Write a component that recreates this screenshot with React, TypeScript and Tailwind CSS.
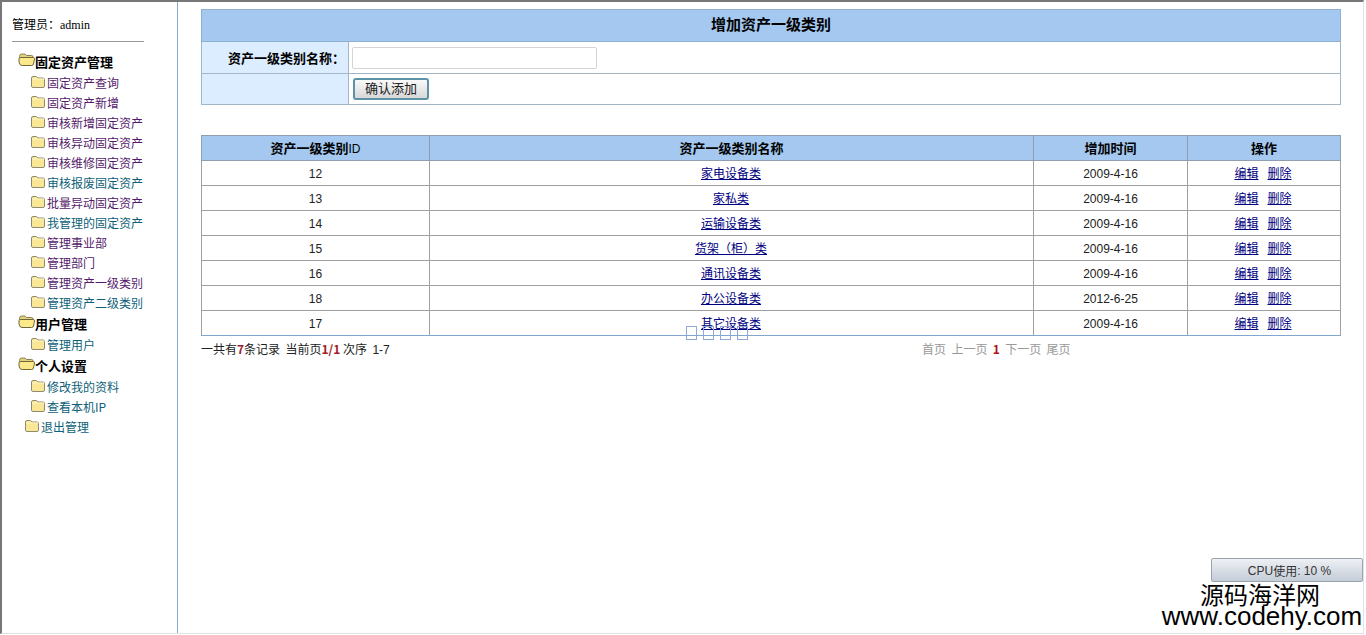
const cjk = "font-['SimSun','Noto_Sans_CJK_SC',sans-serif]";

function Folder({ open = false }: { open?: boolean }) {
  if (open) {
    return (
      <svg width="17" height="14" viewBox="0 0 17 14" className="shrink-0 -mt-[5px]">
        <path d="M1.5 3.5 Q1.5 1 3.5 1 H7 L8.5 2.5 H13.5 Q15 2.5 15 4 V5 H1.5 Z" fill="#e3d27c" stroke="#8a8050" />
        <path d="M1 5.5 Q1 4.5 3 4.5 H15.5 Q16.5 4.5 16.5 6 L15.5 11 Q15.2 12.5 13.5 12.5 H4 Q1.5 12.5 1 9 Z" fill="#fbe98a" stroke="#6f683e" />
      </svg>
    );
  }
  return (
    <svg width="14" height="12" viewBox="0 0 14 12" className="shrink-0 -mt-[3px]">
      <path d="M0.5 2 Q0.5 0.5 2 0.5 H5.5 L7 2 H12 Q13.5 2 13.5 3.5 V10 Q13.5 11.5 12 11.5 H2 Q0.5 11.5 0.5 10 Z" fill="#fae796" stroke="#8f8a72" />
      <path d="M1 3 H13" stroke="#fff4c0" />
    </svg>
  );
}

function Item({ label, color, pl = "pl-[29px]" }: { label: string; color: string; pl?: string }) {
  return (
    <div className={`flex h-5 items-center gap-[2px] ${pl}`}>
      <Folder />
      <span className={`text-xs leading-5 whitespace-nowrap ${color}`}>{label}</span>
    </div>
  );
}

function Group({ label }: { label: string }) {
  return (
    <div className="flex h-[22px] items-center pl-4">
      <Folder open />
      <span className="text-[13px] leading-[22px] font-bold text-black whitespace-nowrap">{label}</span>
    </div>
  );
}

const purple = "text-[#551a6b]";
const teal = "text-[#0e5f78]";

const rows = [
  ["12", "家电设备类", "2009-4-16"],
  ["13", "家私类", "2009-4-16"],
  ["14", "运输设备类", "2009-4-16"],
  ["15", "货架（柜）类", "2009-4-16"],
  ["16", "通讯设备类", "2009-4-16"],
  ["18", "办公设备类", "2012-6-25"],
  ["17", "其它设备类", "2009-4-16"],
];

export default function App() {
  return (
    <div className={`relative flex h-[634px] w-[1364px] overflow-hidden border-t-2 border-r border-b border-l-2 border-t-[#777777] border-r-[#e2e2e2] border-b-[#e2e2e2] border-l-[#777777] bg-white ${cjk}`}>
      <aside className="h-full w-[176px] shrink-0 border-r border-[#86acd0] pt-[13px]">
        <div className="ml-[10px] w-[132px] border-b border-[#999999] pb-[7px] text-xs leading-[18px] text-black">
          管理员：<span className="font-['Liberation_Serif',serif]">admin</span>
        </div>
        <div className="mt-[9px]">
          <Group label="固定资产管理" />
          <Item label="固定资产查询" color={purple} />
          <Item label="固定资产新增" color={purple} />
          <Item label="审核新增固定资产" color={purple} />
          <Item label="审核异动固定资产" color={purple} />
          <Item label="审核维修固定资产" color={purple} />
          <Item label="审核报废固定资产" color={teal} />
          <Item label="批量异动固定资产" color={purple} />
          <Item label="我管理的固定资产" color={teal} />
          <Item label="管理事业部" color={purple} />
          <Item label="管理部门" color={purple} />
          <Item label="管理资产一级类别" color={purple} />
          <Item label="管理资产二级类别" color={teal} />
          <Group label="用户管理" />
          <Item label="管理用户" color={teal} />
          <Group label="个人设置" />
          <Item label="修改我的资料" color={teal} />
          <Item label="查看本机IP" color={teal} />
          <Item label="退出管理" color={teal} pl="pl-[23px]" />
        </div>
      </aside>

      <main className="ml-[23px] w-[1140px] shrink-0 pt-[7px]">
        <table className="w-[1140px] table-fixed border-collapse border border-[#8fb0cf] text-black">
          <colgroup>
            <col className="w-[147px]" />
            <col />
          </colgroup>
          <tbody>
            <tr className="h-8">
              <td colSpan={2} className="border border-[#8fb0cf] bg-[#a4c8f0] pb-[2px] text-center text-[15px] font-bold">
                增加资产一级类别
              </td>
            </tr>
            <tr className="h-8">
              <td className="border border-[#a3b6c6] bg-[#dcedff] pr-[3px] text-right text-[13px] font-bold">资产一级类别名称：</td>
              <td className="border border-[#a3b6c6] pt-px pl-[3px]">
                <input className="block h-[22px] w-[245px] rounded-[2px] border border-[#d4d4d4] bg-white" />
              </td>
            </tr>
            <tr className="h-[31px]">
              <td className="border border-[#a3b6c6] bg-[#dcedff]"></td>
              <td className="border border-[#a3b6c6] pl-1">
                <button className="mb-px block h-[22px] w-[76px] rounded-[3px] border-2 border-[#5d93a6] bg-gradient-to-b from-[#fafafa] to-[#d8d8d8] pb-[2px] text-[13px] leading-none text-[#222222]">
                  确认添加
                </button>
              </td>
            </tr>
          </tbody>
        </table>

        <table className="mt-[30px] w-[1140px] table-fixed border-collapse text-xs text-black">
          <colgroup>
            <col className="w-[228px]" />
            <col className="w-[604px]" />
            <col className="w-[154px]" />
            <col />
          </colgroup>
          <thead>
            <tr className="h-[25px] bg-[#a4c8f0] text-[13px]">
              <th className="border border-[#8f9fae] pb-px text-center font-bold">
                资产一级类别<span className="font-['Liberation_Sans',sans-serif] text-xs font-normal">ID</span>
              </th>
              <th className="border border-[#8f9fae] pb-px text-center font-bold">资产一级类别名称</th>
              <th className="border border-[#8f9fae] pb-px text-center font-bold">增加时间</th>
              <th className="border border-[#8f9fae] pb-px text-center font-bold">操作</th>
            </tr>
          </thead>
          <tbody>
            {rows.map((r, i) => {
              const edge = i === rows.length - 1 ? "border-b-[#7fa8d0]" : "";
              return (
                <tr key={r[0]} className="h-[25px]">
                  <td className={`border border-[#a0a0a0] pt-px text-center font-['Liberation_Sans',sans-serif] text-[#222222] ${edge}`}>{r[0]}</td>
                  <td className={`border border-[#a0a0a0] pr-px text-center ${edge}`}>
                    <a className="text-[#000080] underline">{r[1]}</a>
                  </td>
                  <td className={`border border-[#a0a0a0] pt-px text-center font-['Liberation_Sans',sans-serif] text-[#222222] ${edge}`}>{r[2]}</td>
                  <td className={`border border-[#a0a0a0] pr-[2px] text-center ${edge}`}>
                    <a className="text-[#000080] underline">编辑</a>
                    <a className="ml-[9px] text-[#000080] underline">删除</a>
                  </td>
                </tr>
              );
            })}
          </tbody>
        </table>

        <div className="mt-[5px] flex h-4 items-center text-xs leading-4 text-[#222222]">
          <div className="w-[721px] whitespace-nowrap">
            一共有<b className="text-[#a01c28]">7</b>条记录&nbsp;&nbsp;当前页<b className="text-[#a01c28]">1/1</b>&nbsp;次序&nbsp;&nbsp;<span className="font-['Liberation_Sans',sans-serif]">1-7</span>
          </div>
          <div className="whitespace-nowrap text-[#999999]">
            首页&nbsp;&nbsp;上一页&nbsp;&nbsp;<b className="text-[#b01020]">1</b>&nbsp;&nbsp;下一页&nbsp;&nbsp;尾页
          </div>
        </div>
      </main>

      {/* missing-glyph boxes lying over the table */}
      <div className="absolute top-[324px] left-[684px] flex gap-[6px]">
        <span className="h-[14px] w-[11px] border border-[#8fa8d8]"></span>
        <span className="h-[14px] w-[11px] border border-[#8fa8d8]"></span>
        <span className="h-[14px] w-[11px] border border-[#8fa8d8]"></span>
        <span className="h-[14px] w-[11px] border border-[#8fa8d8]"></span>
      </div>

      {/* floating CPU meter */}
      <div className="absolute top-[556px] left-[1209px] flex h-6 w-[152px] items-center justify-center rounded-[2px] border border-[#9aa4ae] bg-gradient-to-b from-[#eef1f5] to-[#c4ccd6] pt-px pl-[5px] font-['Liberation_Sans',sans-serif] text-xs text-[#333333]">
        CPU<span className={cjk}>使用</span>: 10 %
      </div>

      {/* watermark */}
      <div className="absolute top-[580px] left-[1158px] flex w-[204px] flex-col items-center text-black">
        <div className="pr-[4px] text-2xl leading-[23px] font-['Noto_Sans_CJK_SC',sans-serif]">源码海洋网</div>
        <div className="font-['Liberation_Sans',sans-serif] text-[26px] leading-[22px] whitespace-nowrap">www.codehy.com</div>
      </div>
    </div>
  );
}
